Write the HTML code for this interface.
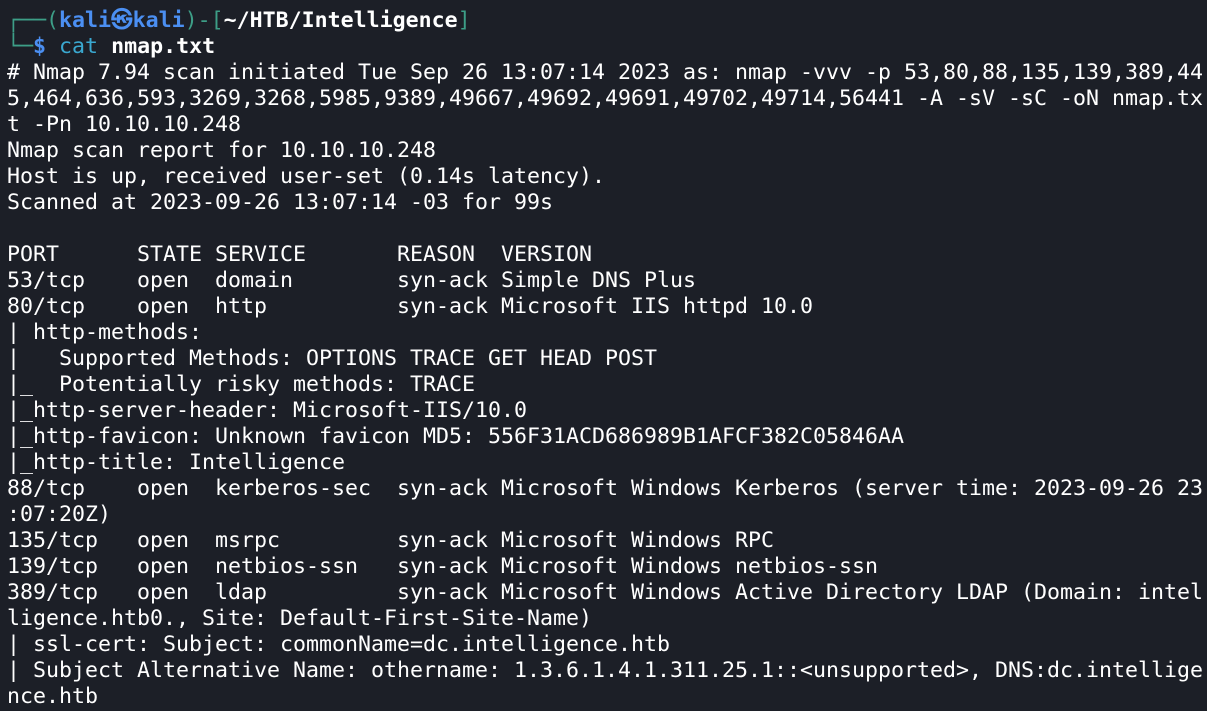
<!DOCTYPE html>
<html><head><meta charset="utf-8"><style>
html,body{margin:0;padding:0;background:#1c1f27;width:1207px;height:711px;overflow:hidden}
pre{margin:0;padding:8px 0 0 7px;font-family:"DejaVu Sans Mono","Liberation Mono",monospace;font-size:21.6px;line-height:26px;color:#ffffff;white-space:pre}
.g{color:#3d9e87}.b{color:#4b8ff2;font-weight:bold}.w{font-weight:bold;color:#fff}.c{color:#3aa8d0}
</style></head><body><pre><span class="g">┌──(</span><span class="b">kali㉿kali</span><span class="g">)-[</span><span class="w">~/HTB/Intelligence</span><span class="g">]</span>
<span class="g">└─</span><span class="b">$</span> <span class="c">cat</span> <span class="w">nmap.txt</span>
# Nmap 7.94 scan initiated Tue Sep 26 13:07:14 2023 as: nmap -vvv -p 53,80,88,135,139,389,44
5,464,636,593,3269,3268,5985,9389,49667,49692,49691,49702,49714,56441 -A -sV -sC -oN nmap.tx
t -Pn 10.10.10.248
Nmap scan report for 10.10.10.248
Host is up, received user-set (0.14s latency).
Scanned at 2023-09-26 13:07:14 -03 for 99s

PORT      STATE SERVICE       REASON  VERSION
53/tcp    open  domain        syn-ack Simple DNS Plus
80/tcp    open  http          syn-ack Microsoft IIS httpd 10.0
| http-methods: 
|   Supported Methods: OPTIONS TRACE GET HEAD POST
|_  Potentially risky methods: TRACE
|_http-server-header: Microsoft-IIS/10.0
|_http-favicon: Unknown favicon MD5: 556F31ACD686989B1AFCF382C05846AA
|_http-title: Intelligence
88/tcp    open  kerberos-sec  syn-ack Microsoft Windows Kerberos (server time: 2023-09-26 23
:07:20Z)
135/tcp   open  msrpc         syn-ack Microsoft Windows RPC
139/tcp   open  netbios-ssn   syn-ack Microsoft Windows netbios-ssn
389/tcp   open  ldap          syn-ack Microsoft Windows Active Directory LDAP (Domain: intel
ligence.htb0., Site: Default-First-Site-Name)
| ssl-cert: Subject: commonName=dc.intelligence.htb
| Subject Alternative Name: othername: 1.3.6.1.4.1.311.25.1::&lt;unsupported&gt;, DNS:dc.intellige
nce.htb</pre></body></html>
